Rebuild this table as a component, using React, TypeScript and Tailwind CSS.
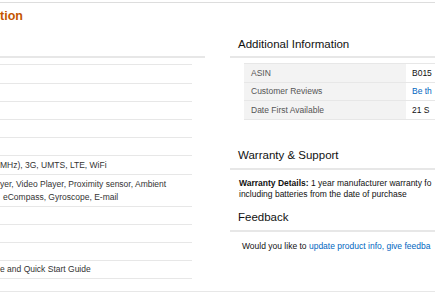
import React from "react";

const specRows: { h: string; lines: string[] }[] = [
  { h: "h-[19px]", lines: [] },
  { h: "h-[18px]", lines: [] },
  { h: "h-[18px]", lines: [] },
  { h: "h-[18px]", lines: [] },
  { h: "h-[18px]", lines: [] },
  { h: "h-[19px]", lines: ["MHz), 3G, UMTS, LTE, WiFi"] },
  {
    h: "h-[32px]",
    lines: ["yer, Video Player, Proximity sensor, Ambient", "eCompass, Gyroscope, E-mail"],
  },
  { h: "h-[18px]", lines: [] },
  { h: "h-[18px]", lines: [] },
  { h: "h-[18px]", lines: [] },
  { h: "h-[18px]", lines: ["e and Quick Start Guide"] },
];

// values are cut by the right edge of the page, as in the capture
const infoRows = [
  { label: "ASIN", value: "B015", link: false, h: "h-[19px]" },
  { label: "Customer Reviews", value: "Be th", link: true, h: "h-[18px]" },
  { label: "Date First Available", value: "21 S", link: false, h: "h-[19px]" },
];

function SectionHeading({ title, className = "" }: { title: string; className?: string }) {
  return (
    <div className={`flex items-center pl-[8px] border-b-2 border-[#e7e7e7] text-[11.5px] text-[#111] leading-none ${className}`}>
      {title}
    </div>
  );
}

export default function App() {
  return (
    <div className="w-[435px] h-[295px] overflow-hidden bg-white font-['Liberation_Sans',Arial,sans-serif] text-[#333]">
      <div className="h-[2px]" />
      <div className="border-t border-[#dddddd]" />
      <div className="h-[26px] flex items-center text-[12.5px] font-bold text-[#c45500] leading-none">tion</div>

      <div className="flex h-[262px]">
        {/* Technical details (cropped) */}
        <div className="w-[205px] shrink-0">
          <div className="h-[29px] border-b-2 border-[#e7e7e7]" />
          <div className="mt-[6px] w-[192px] border-t border-[#e7e7e7]">
            {specRows.map((row, i) => (
              <div
                key={i}
                className={`${row.h} box-border border-b border-[#e7e7e7] flex flex-col justify-center text-[8.5px] leading-[13px] whitespace-nowrap`}
              >
                {row.lines.map((line, j) => (
                  <div key={j} className={j === 1 ? "pl-[3px]" : ""}>
                    {line}
                  </div>
                ))}
              </div>
            ))}
          </div>
        </div>

        {/* Additional information */}
        <div className="ml-[25px] flex-1 min-w-0">
          <SectionHeading title="Additional Information" className="h-[29px] pt-[4px]" />
          <div className="ml-[14px] mt-[5px] border-t border-[#e7e7e7] text-[8.5px] whitespace-nowrap">
            {infoRows.map((row) => (
              <div key={row.label} className={`${row.h} box-border border-b border-[#e7e7e7] flex`}>
                <div className="w-[162px] shrink-0 bg-[#f3f3f3] pl-[7px] flex items-center text-[#555]">
                  {row.label}
                </div>
                <div className={`pl-[6px] flex items-center ${row.link ? "text-[#0066c0]" : "text-[#111]"}`}>
                  {row.value}
                </div>
              </div>
            ))}
          </div>

          <SectionHeading title="Warranty & Support" className="mt-[27px] h-[23px] pb-[3px]" />
          <div className="mt-[8px] pl-[9px] text-[8.5px] leading-[10.5px] text-[#111] whitespace-nowrap">
            <div>
              <span className="font-bold">Warranty Details:</span> 1 year manufacturer warranty fo
            </div>
            <div>including batteries from the date of purchase</div>
          </div>

          <SectionHeading title="Feedback" className="mt-[10px] h-[23px] pb-[3px]" />
          <div className="mt-[9px] pl-[12px] text-[8.5px] leading-[10.5px] text-[#111] whitespace-nowrap">
            Would you like to <span className="text-[#0066c0]">update product info, give feedba</span>
          </div>
        </div>
      </div>

      <div className="border-t border-[#e7e7e7]" />
    </div>
  );
}
